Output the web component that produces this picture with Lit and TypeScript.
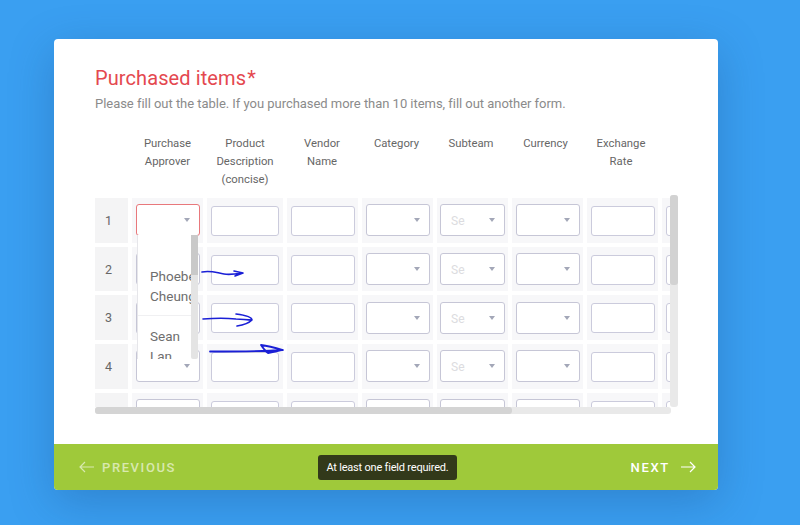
import { LitElement, html, css, svg } from "lit";
import { customElement } from "lit/decorators.js";

const COLS = ["Purchase Approver", "Product Description (concise)", "Vendor Name", "Category", "Subteam", "Currency", "Exchange Rate"];
const KINDS = ["select", "input", "input", "select", "search", "select", "input", "input"];

@customElement("app-root")
export class AppRoot extends LitElement {
  static styles = css`
    :host { display: block; position: relative; width: 800px; height: 525px; overflow: hidden; background: #3a9ff1; font-family: Roboto, "Liberation Sans", sans-serif; }
    .card { position: relative; box-sizing: border-box; width: 664px; height: 451px; margin-left: 54px; top: 39px; background: #fff; border-radius: 4px; box-shadow: 0 12px 45px rgba(20,60,120,.28); display: flex; flex-direction: column; overflow: hidden; }
    .body { padding: 25px 0 0 41px; flex: 1; }
    h1 { margin: 0; font-size: 20px; line-height: 28px; font-weight: 400; color: #e4484f; letter-spacing: .1px; }
    h1 span { margin-left: 1px; }
    .sub { margin: 2px 0 0; font-size: 13px; line-height: 20px; color: #8b8b8b; letter-spacing: -.035px; }
    .grid { display: grid; grid-template-columns: 33px 71px 76px 71px 71px 71px 71px 71px 72px; column-gap: 4px; }
    .head { margin-top: 21px; height: 53px; grid-template-columns: 33px 71px 76px 70px 71px 70px 71px 72px; }
    .head div { font-size: 11.3px; line-height: 18px; color: #666; text-align: center; padding: 0 8px; }
    .wrap { position: relative; width: 576px; margin-top: 7px; height: 219px; }
    .view { height: 212px; overflow: hidden; padding-top: 3px; box-sizing: border-box; }
    .rows { row-gap: 4px; grid-auto-rows: 44.7px; width: 700px; }
    .num { background: #f4f4f5; font-size: 12.5px; color: #666; display: flex; align-items: center; padding-left: 10px; box-sizing: border-box; }
    .cell { background: #f7f7f9; display: flex; align-items: center; padding: 0 3px 0 4px; min-width: 0; position: relative; }
    .cell.c2 { padding-right: 4px; }
    .cell.c5 { padding-left: 3px; }
    .field { box-sizing: border-box; flex: 1; min-width: 0; background: #fff; border: 1px solid #cbcbdc; border-radius: 3px; }
    .input { height: 30px; margin-top: 1px; }
    .select { height: 32px; position: relative; border-color: #c6c6d6; }
    .select.err { border-color: #e8787c; }
    .caret { position: absolute; right: 9px; top: 13px; width: 0; height: 0; border-left: 3.5px solid transparent; border-right: 3.5px solid transparent; border-top: 4.5px solid #a3a7b8; }
    .ph { position: absolute; left: 10px; top: 7px; width: 14px; overflow: hidden; font-size: 12px; line-height: 18px; color: #dcdce0; }
    .drop { position: absolute; z-index: 3; left: 0; top: 30px; width: 61px; height: 124px; background: #fff; border-left: 1px solid #e6e6ea; overflow: hidden; box-sizing: border-box; }
    .opt { width: 41px; padding: 0 0 0 12px; box-sizing: content-box; font-size: 13.5px; line-height: 20px; color: #6e6e6e; white-space: nowrap; overflow: hidden; }
    .opt.a { padding-top: 31px; padding-bottom: 9px; border-bottom: 1px solid #f0f0f2; }
    .opt.b { padding-top: 10px; width: 41px; white-space: normal; }
    .dbar { position: absolute; right: 0; top: 0; bottom: 0; width: 7px; background: #e4e4e4; border-radius: 2px; }
    .dthumb { height: 40px; background: #c9c9c9; }
    .vbar { position: absolute; right: -7px; top: 0; width: 8px; height: 212px; background: #e9e9e9; border-radius: 3px; }
    .vthumb { height: 90px; background: #d2d2d2; border-radius: 3px; }
    .hbar { position: absolute; left: 0; top: 212px; width: 576px; height: 7px; background: #e9e9e9; border-radius: 3px; }
    .hthumb { width: 417px; height: 7px; background: #d4d4d4; border-radius: 3px; }
    .foot { height: 46px; background: #9fc93a; display: grid; grid-template-columns: 1fr auto 1fr; align-items: center; padding: 0 22px 0 25px; }
    .nav { display: flex; align-items: center; gap: 8px; font-size: 13px; font-weight: 500; letter-spacing: 1.6px; }
    .prev { color: rgba(255,255,255,.6); }
    .next { color: #fff; justify-content: flex-end; gap: 11px; letter-spacing: 1.7px; }
    .nav svg { display: block; }
    .tip { background: #32391a; color: #fff; border-radius: 3px; font-size: 11px; line-height: 25px; height: 25px; width: 139px; text-align: center; letter-spacing: -.2px; }
    .ink { position: absolute; left: 0; top: 0; z-index: 5; pointer-events: none; }
  `;

  private cellFor(kind: string, col: number, row: number) {
    const cls = `cell c${col + 1}`;
    if (kind === "input") return html`<div class=${cls}><div class="field input"></div></div>`;
    const first = col === 0 && row === 0;
    return html`<div class=${cls} style=${first ? "z-index:3" : ""}>
      <div class="field select ${first ? "err" : ""}">
        ${kind === "search" ? html`<span class="ph">Search</span>` : ""}
        <span class="caret"></span>
        ${first ? html`<div class="drop">
          <div class="opt a">Phoebe<br />Cheung</div>
          <div class="opt b">Sean Lan</div>
          <div class="dbar"><div class="dthumb"></div></div>
        </div>` : ""}
      </div>
    </div>`;
  }

  render() {
    return html`
      <div class="card">
        <div class="body">
          <h1>Purchased items<span>*</span></h1>
          <p class="sub">Please fill out the table. If you purchased more than 10 items, fill out another form.</p>
          <div class="grid head">
            <span></span>
            ${COLS.map((c) => html`<div>${c}</div>`)}
          </div>
          <div class="wrap">
            <div class="view">
              <div class="grid rows">
                ${[1, 2, 3, 4, 5].map((n, r) => html`
                  <div class="num">${n < 5 ? n : ""}</div>
                  ${KINDS.map((k, c) => this.cellFor(k, c, r))}
                `)}
              </div>
            </div>
            <div class="vbar"><div class="vthumb"></div></div>
            <div class="hbar"><div class="hthumb"></div></div>
          </div>
        </div>
        <div class="foot">
          <div class="nav prev">
            <svg width="15" height="12" viewBox="0 0 15 12" fill="none" stroke="currentColor" stroke-width="1.2"><path d="M15 6H1M6 1 1 6l5 5" /></svg>
            PREVIOUS
          </div>
          <div class="tip">At least one field required.</div>
          <div class="nav next">
            NEXT
            <svg width="15" height="12" viewBox="0 0 15 12" fill="none" stroke="currentColor" stroke-width="1.2"><path d="M0 6h14M9 1l5 5-5 5" /></svg>
          </div>
        </div>
      </div>
      <svg class="ink" width="800" height="525" viewBox="0 0 800 525" fill="none" stroke="#1a1fd6" stroke-width="1.6" stroke-linecap="round" stroke-linejoin="round">
        ${svg`<path d="M202 272c9-2 15 1 22 2 6 1 12 0 19-1l-9-2M243 273l-8 3" />
        <path d="M203 319c12-1 24-1 33 0 5 0 11 1 16 1 0-3-8-5-16-6M252 320c-3 3-9 5-15 6" />
        <path d="M210 351.5c24 0 50 0 73-1.5-7-2-14-4-22-5 2 3 4 6 7 8l14-3" stroke-width="1.8" />`}
      </svg>
    `;
  }
}
